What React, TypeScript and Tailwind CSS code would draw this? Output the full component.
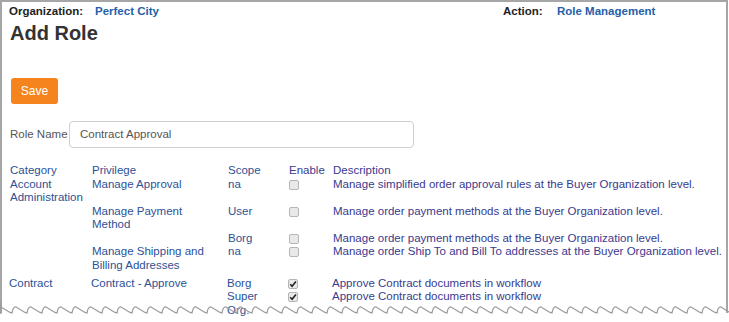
import React from "react";

type Row = {
  cat?: string[];
  priv?: string[];
  scope: string[];
  on: boolean;
  desc: string;
};

const rows: Row[] = [
  { cat: ["Account", "Administration"], priv: ["Manage Approval"], scope: ["na"], on: false, desc: "Manage simplified order approval rules at the Buyer Organization level." },
  { priv: ["Manage Payment", "Method"], scope: ["User"], on: false, desc: "Manage order payment methods at the Buyer Organization level." },
  { scope: ["Borg"], on: false, desc: "Manage order payment methods at the Buyer Organization level." },
  { priv: ["Manage Shipping and", "Billing Addresses"], scope: ["na"], on: false, desc: "Manage order Ship To and Bill To addresses at the Buyer Organization level." },
];

const contract: Row[] = [
  { cat: ["Contract"], priv: ["Contract - Approve"], scope: ["Borg"], on: true, desc: "Approve Contract documents in workflow" },
  { scope: ["Super", "Org."], on: true, desc: "Approve Contract documents in workflow" },
];

function Box({ on }: { on: boolean }) {
  return (
    <span className="mt-[2px] flex h-[10px] w-[10px] items-center justify-center rounded-[2px] border border-[#b5b5b5] bg-[#e9e9e9]">
      {on && (
        <svg width="8" height="8" viewBox="0 0 8 8">
          <path d="M1.2 4.3 L3.1 6.2 L6.9 1.6" fill="none" stroke="#222" strokeWidth="1.6" />
        </svg>
      )}
    </span>
  );
}

function Lines({ items }: { items?: string[] }) {
  return <div>{items?.map((t) => <div key={t}>{t}</div>)}</div>;
}

function TableRow({ r }: { r: Row }) {
  return (
    <div className="grid grid-cols-[82px_136px_61px_44px_1fr]">
      <div className="text-[#2d5196]"><Lines items={r.cat} /></div>
      <div className="text-[#2d5196]"><Lines items={r.priv} /></div>
      <div className="text-[#2d5196]"><Lines items={r.scope} /></div>
      <div><Box on={r.on} /></div>
      <div className="whitespace-nowrap text-[#3a3a8e]">{r.desc}</div>
    </div>
  );
}

// bottom torn-paper edge
function TornEdge() {
  const teeth: string[] = [];
  for (let x = -3; x < 740; x += 15) {
    teeth.push(`Q ${x + 1} 306.5 ${x + 4} 307 L ${x + 13} 312.5 L ${x + 15} 313`);
  }
  const d = `M 1 300 L 1 313 L -3 313 ${teeth.join(" ")}`;
  return (
    <svg className="absolute left-0 top-0" width="729" height="322" viewBox="0 0 729 322">
      <path d="M 0 316 L 740 316 L 740 322 L 0 322 Z" fill="#fff" />
      <path d={d} fill="none" stroke="#9c9c9c" strokeWidth="1.3" />
    </svg>
  );
}

export default function App() {
  return (
    <div className="relative h-[322px] w-[729px] overflow-hidden bg-white font-['Liberation_Sans',Arial,sans-serif]">
      <div className="h-[313px] w-[728px] border-l-2 border-r-2 border-t-2 border-[#a6a6a6] pl-[8px] pt-[2px]">
        <div className="-ml-px flex text-[11.5px] font-bold leading-[14px]">
          <span className="w-[86px] text-[#222]">Organization:</span>
          <span className="w-[408px] text-[#2560a8]">Perfect City</span>
          <span className="w-[54px] text-[#222]">Action:</span>
          <span className="text-[#2560a8]">Role Management</span>
        </div>
        <h1 className="mt-[3px] text-[20px] font-bold leading-[24px] text-[#333]">Add Role</h1>
        <button className="ml-px mt-[33px] flex h-[26px] w-[47px] items-center justify-center rounded-[3px] bg-[#f5841f] text-[12px] text-white">
          Save
        </button>
        <div className="mt-[17px] flex items-center text-[11.5px] text-[#555]">
          <span className="w-[59px]">Role Name</span>
          <div className="flex h-[27px] w-[345px] items-center rounded-[4px] border border-[#cfcfcf] pl-[10px]">
            Contract Approval
          </div>
        </div>
        <div className="mt-[16px] text-[11.5px] leading-[13.5px]">
          <div className="grid grid-cols-[82px_136px_61px_44px_1fr]">
            <span className="text-[#2d5196]">Category</span>
            <span className="text-[#2d5196]">Privilege</span>
            <span className="text-[#2d5196]">Scope</span>
            <span className="text-[#3a3a8e]">Enable</span>
            <span className="text-[#3a3a8e]">Description</span>
          </div>
          {rows.map((r, i) => (
            <TableRow key={i} r={r} />
          ))}
          <div className="-ml-px mt-[4.5px]">
            {contract.map((r, i) => (
              <TableRow key={i} r={r} />
            ))}
          </div>
        </div>
      </div>
      <TornEdge />
    </div>
  );
}
